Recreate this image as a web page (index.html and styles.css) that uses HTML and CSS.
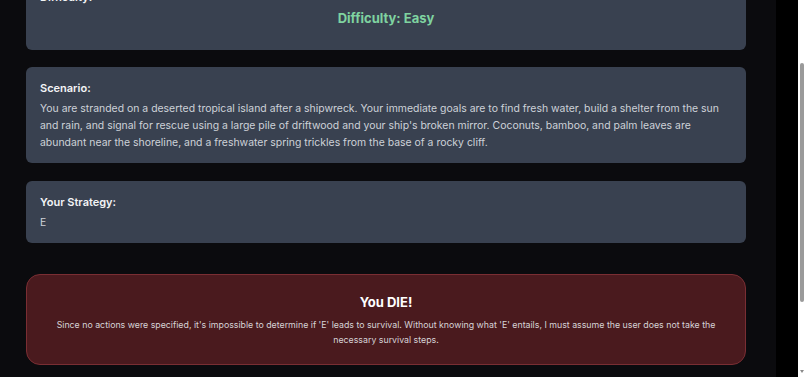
FILE: index.html
```html
<!DOCTYPE html>
<html lang="en">
<head>
    <meta charset="UTF-8">
    <meta name="viewport" content="width=device-width, initial-scale=1.0">
    <title>Survival Scenario - Result</title>
    <link rel="stylesheet" href="styles.css">
</head>
<body>
    <div class="page">
        <div class="content">
            <div class="card difficulty">
                <div class="card-title">Difficulty:</div>
                <div class="difficulty-value">Difficulty: Easy</div>
            </div>

            <div class="card">
                <div class="card-title">Scenario:</div>
                <p class="card-text">You are stranded on a deserted tropical island after a shipwreck. Your immediate goals are to find fresh water, build a shelter from the sun and rain, and signal for rescue using a large pile of driftwood and your ship's broken mirror. Coconuts, bamboo, and palm leaves are abundant near the shoreline, and a freshwater spring trickles from the base of a rocky cliff.</p>
            </div>

            <div class="card">
                <div class="card-title">Your Strategy:</div>
                <p class="card-text">E</p>
            </div>

            <div class="result result-dead">
                <h2 class="result-title">You DIE!</h2>
                <p class="result-text">Since no actions were specified, it's impossible to determine if 'E' leads to survival. Without knowing what 'E' entails, I must assume the user does not take the necessary survival steps.</p>
            </div>
        </div>
    </div>
    <div class="gutter"></div>
    <div class="scrollbar">
        <div class="scroll-thumb"></div>
        <div class="scroll-arrow"></div>
    </div>
</body>
</html>
```

FILE: styles.css
```css
body {
    margin: 0;
    height: 377px;
    overflow: hidden;
    display: flex;
    background-color: #000;
    font-family: Inter, "Noto Sans", sans-serif;
    color: #f3f4f6;
}

.page {
    width: 776px;
    flex-shrink: 0;
    background-color: #0b0b0e;
    padding: 0 30px 0 26px;
    box-sizing: border-box;
}

.content {
    margin-top: -25px; /* page is scrolled down a bit */
    display: flex;
    flex-direction: column;
    gap: 18px;
}

.card {
    background-color: #394150;
    border-radius: 6px;
    padding: 13px 14px 12px;
}

.difficulty {
    padding-top: 14px;
    margin-bottom: -1px;
}

.card-title {
    font-size: 11px;
    line-height: 16px;
    font-weight: 600;
    margin-bottom: 4px;
}

.card-text {
    margin: 0;
    font-size: 10.45px;
    line-height: 17px;
    color: #cdd1d8;
}

.difficulty-value {
    margin-top: -1px;
    text-align: center;
    font-size: 13px;
    line-height: 20px;
    font-weight: 700;
    color: #7fd3a0;
    padding-bottom: 10px;
}

.result {
    margin-top: 13px;
    border-radius: 14px;
    padding: 17px 28px;
    text-align: center;
}

.result-dead {
    background-color: #4a1a1e;
    border: 1px solid #7a2e33;
}

.result-title {
    margin: 0 0 5px;
    font-size: 13px;
    line-height: 20px;
    font-weight: 700;
    color: #fff;
}

.result-text {
    margin: 0;
    font-size: 8.8px;
    line-height: 15px;
    color: #d6d3d6;
}

.gutter {
    width: 22px;
    background-color: #000;
}

.scrollbar {
    flex: 1;
    background-color: #fff;
    display: flex;
    flex-direction: column;
    align-items: center;
    padding-top: 63px;
    box-sizing: border-box;
}

.scroll-thumb {
    width: 4px;
    height: 239px;
    border-radius: 2px;
    background-color: #9a9a9a;
}

.scroll-arrow {
    margin-top: auto;
    margin-bottom: 4px;
    width: 0;
    height: 0;
    border-left: 2px solid transparent;
    border-right: 2px solid transparent;
    border-top: 3px solid #8a8a8a;
}
```
